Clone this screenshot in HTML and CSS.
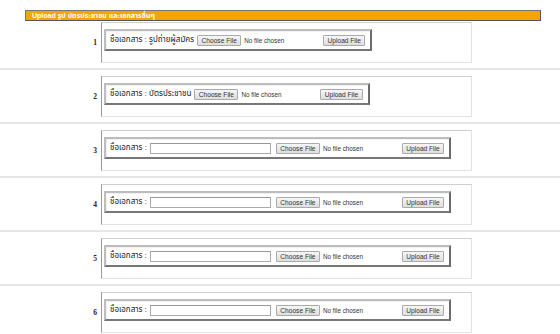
FILE: index.html
```html
<!DOCTYPE html>
<html lang="th">
<head>
  <meta charset="UTF-8" />
  <title>Upload เอกสาร</title>
  <link rel="stylesheet" href="styles.css">
</head>
<body>
  <div class="title">Upload รูป บัตรประชาชน และเอกสารอื่นๆ</div>

  <div class="list">
    <!-- 1 -->
    <div class="row">
      <div class="num">1</div>
      <div class="cell">
        <div class="doc">
          <span class="label">ชื่อเอกสาร : รูปถ่ายผู้สมัคร</span>
          <span class="file"><span class="btn">Choose File</span><span class="status">No file chosen</span></span>
          <button class="btn">Upload File</button>
        </div>
      </div>
    </div>
    <!-- 2 -->
    <div class="row">
      <div class="num">2</div>
      <div class="cell">
        <div class="doc">
          <span class="label">ชื่อเอกสาร : บัตรประชาชน</span>
          <span class="file"><span class="btn">Choose File</span><span class="status">No file chosen</span></span>
          <button class="btn">Upload File</button>
        </div>
      </div>
    </div>
    <!-- 3 -->
    <div class="row">
      <div class="num">3</div>
      <div class="cell">
        <div class="doc">
          <span class="label">ชื่อเอกสาร :</span>
          <input type="text" class="name" />
          <span class="file"><span class="btn">Choose File</span><span class="status">No file chosen</span></span>
          <button class="btn">Upload File</button>
        </div>
      </div>
    </div>
    <!-- 4 -->
    <div class="row">
      <div class="num">4</div>
      <div class="cell">
        <div class="doc">
          <span class="label">ชื่อเอกสาร :</span>
          <input type="text" class="name" />
          <span class="file"><span class="btn">Choose File</span><span class="status">No file chosen</span></span>
          <button class="btn">Upload File</button>
        </div>
      </div>
    </div>
    <!-- 5 -->
    <div class="row">
      <div class="num">5</div>
      <div class="cell">
        <div class="doc">
          <span class="label">ชื่อเอกสาร :</span>
          <input type="text" class="name" />
          <span class="file"><span class="btn">Choose File</span><span class="status">No file chosen</span></span>
          <button class="btn">Upload File</button>
        </div>
      </div>
    </div>
    <!-- 6 -->
    <div class="row">
      <div class="num">6</div>
      <div class="cell">
        <div class="doc">
          <span class="label">ชื่อเอกสาร :</span>
          <input type="text" class="name" />
          <span class="file"><span class="btn">Choose File</span><span class="status">No file chosen</span></span>
          <button class="btn">Upload File</button>
        </div>
      </div>
    </div>
  </div>
</body>
</html>
```

FILE: styles.css
```css
body {
  margin: 0;
  background: #fff;
  font-family: 'Liberation Sans', Tahoma, 'Noto Sans Thai', sans-serif;
  color: #333;
}
.title {
  margin: 10px 19px 0 25px;
  height: 9px;
  line-height: 9px;
  padding-left: 6px;
  background: #f8a400;
  border: 1px solid #777;
  border-right-color: #555;
  border-bottom-color: #555;
  color: #fff;
  font-size: 7px;
  font-weight: bold;
}
.row {
  display: flex;
  align-items: center;
  padding: 6px 0 5px;
  border-bottom: 2px solid #e6e6e6;
}
.row:first-child {
  padding-top: 1px;
}
.num {
  width: 97px;
  padding-right: 4px;
  text-align: right;
  font-family: 'Liberation Serif', serif;
  font-weight: bold;
  font-size: 7.5px;
  color: #222;
}
.cell {
  box-sizing: border-box;
  width: 371px;
  height: 41px;
  padding: 5px 0 0 2px;
  border: 1px solid #e2e2e2;
  border-top-color: #d0d0d0;
  border-left-color: #9a9a9a;
}
.doc {
  display: inline-flex;
  align-items: center;
  box-sizing: border-box;
  height: 22px;
  padding: 0 5px 0 4px;
  border: 2px solid;
  border-color: #bdbdbd #6a6a6a #777 #bdbdbd;
  box-shadow: inset 1px 1px #f2f2f2;
}
.label {
  margin-right: 3px;
  font-size: 8px;
  color: #222;
}
.name {
  box-sizing: border-box;
  width: 121px;
  height: 11px;
  margin: 0 5px 0 0;
  padding: 0;
  border: 1px solid #aaa;
  border-top-color: #999;
}
.file {
  display: flex;
  align-items: center;
  width: 126px;
}
.btn {
  box-sizing: border-box;
  display: inline-block;
  height: 11px;
  line-height: 9px;
  padding: 0 3.5px;
  margin: 0;
  border: 1px solid #aaa;
  border-radius: 1px;
  background: linear-gradient(#f6f6f6, #dedede);
  font-family: 'Liberation Sans', sans-serif;
  font-size: 6.6px;
  color: #333;
  white-space: nowrap;
}
.status {
  margin-left: 3px;
  font-size: 6.3px;
  color: #333;
  white-space: nowrap;
}
```
